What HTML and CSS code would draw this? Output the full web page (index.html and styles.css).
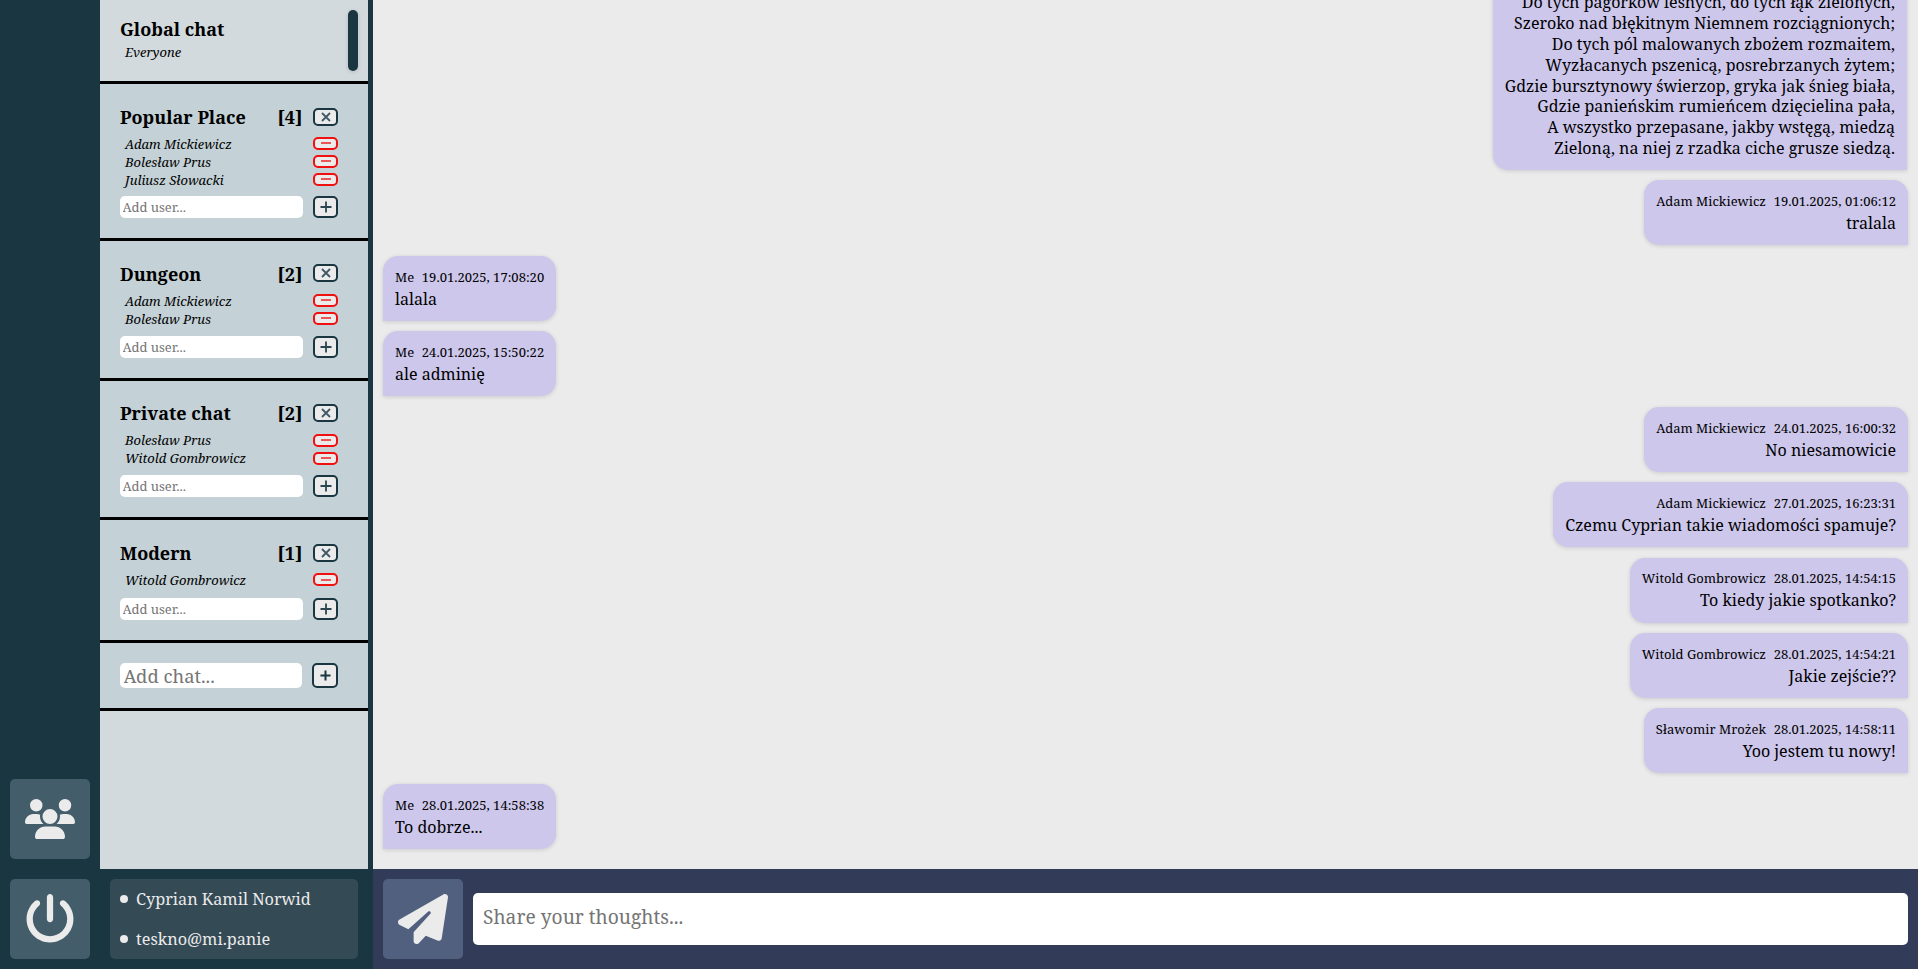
FILE: index.html
```html
<!DOCTYPE html>
<html lang="pl">
<head>
<meta charset="utf-8">
<title>Chat</title>
<link rel="stylesheet" href="styles.css">
</head>
<body>
<svg class="defs" width="0" height="0">
  <symbol id="x" viewBox="0 0 12 12"><path d="M2 2l8 8M10 2l-8 8"/></symbol>
  <symbol id="minus" viewBox="0 0 12 12"><path d="M1 6h10"/></symbol>
  <symbol id="plus" viewBox="0 0 12 12"><path d="M.5 6h11M6 .5v11"/></symbol>
</svg>
<div class="app">
  <nav class="rail">
    <button class="tile"><svg width="50" height="40" viewBox="0 0 640 512"><path d="M144 0a80 80 0 1 1 0 160A80 80 0 1 1 144 0zM512 0a80 80 0 1 1 0 160A80 80 0 1 1 512 0zM0 298.7C0 239.8 47.8 192 106.7 192h42.7c15.9 0 31 3.5 44.6 9.7c-1.3 7.2-1.9 14.7-1.9 22.3c0 38.2 16.8 72.5 43.3 96c-.2 0-.4 0-.7 0H21.3C9.6 320 0 310.4 0 298.7zM405.3 320c-.2 0-.4 0-.7 0c26.6-23.5 43.3-57.8 43.3-96c0-7.6-.7-15-1.9-22.3c13.6-6.3 28.7-9.7 44.6-9.7h42.7C592.2 192 640 239.8 640 298.7c0 11.8-9.6 21.3-21.3 21.3H405.3zM224 224a96 96 0 1 1 192 0 96 96 0 1 1 -192 0zM128 485.3C128 411.7 187.7 352 261.3 352H378.7C452.3 352 512 411.7 512 485.3c0 14.7-11.9 26.7-26.7 26.7H154.7c-14.7 0-26.7-11.9-26.7-26.7z"/></svg></button>
    <button class="tile"><svg width="50" height="50" viewBox="0 0 512 512"><path d="M288 32c0-17.7-14.3-32-32-32s-32 14.3-32 32V256c0 17.7 14.3 32 32 32s32-14.3 32-32V32zM143.5 120.6c13.6-11.3 15.4-31.5 4.1-45.1s-31.5-15.4-45.1-4.1C49.7 115.4 16 181.8 16 256c0 132.5 107.5 240 240 240s240-107.5 240-240c0-74.2-33.8-140.6-86.6-184.6c-13.6-11.3-33.8-9.4-45.1 4.1s-9.4 33.8 4.1 45.1c38.9 32.3 63.5 81 63.5 135.4c0 97.2-78.8 176-176 176s-176-78.8-176-176c0-54.4 24.7-103.1 63.5-135.4z"/></svg></button>
  </nav>
  <aside class="side">
    <div class="chats">
      <div class="thumb"></div>
      <section class="chat global">
        <div class="head"><h2>Global chat</h2></div>
        <div class="member"><span>Everyone</span></div>
      </section>
      <section class="chat">
        <div class="head"><h2>Popular Place</h2><b>[4]</b><button class="btn close"><svg><use href="#x"/></svg></button></div>
        <div class="member"><span>Adam Mickiewicz</span><button class="btn del"><svg><use href="#minus"/></svg></button></div>
        <div class="member"><span>Bolesław Prus</span><button class="btn del"><svg><use href="#minus"/></svg></button></div>
        <div class="member"><span>Juliusz Słowacki</span><button class="btn del"><svg><use href="#minus"/></svg></button></div>
        <div class="add"><input placeholder="Add user..."><button class="btn plus"><svg><use href="#plus"/></svg></button></div>
      </section>
      <section class="chat two">
        <div class="head"><h2>Dungeon</h2><b>[2]</b><button class="btn close"><svg><use href="#x"/></svg></button></div>
        <div class="member"><span>Adam Mickiewicz</span><button class="btn del"><svg><use href="#minus"/></svg></button></div>
        <div class="member"><span>Bolesław Prus</span><button class="btn del"><svg><use href="#minus"/></svg></button></div>
        <div class="add"><input placeholder="Add user..."><button class="btn plus"><svg><use href="#plus"/></svg></button></div>
      </section>
      <section class="chat two">
        <div class="head"><h2>Private chat</h2><b>[2]</b><button class="btn close"><svg><use href="#x"/></svg></button></div>
        <div class="member"><span>Bolesław Prus</span><button class="btn del"><svg><use href="#minus"/></svg></button></div>
        <div class="member"><span>Witold Gombrowicz</span><button class="btn del"><svg><use href="#minus"/></svg></button></div>
        <div class="add"><input placeholder="Add user..."><button class="btn plus"><svg><use href="#plus"/></svg></button></div>
      </section>
      <section class="chat one">
        <div class="head"><h2>Modern</h2><b>[1]</b><button class="btn close"><svg><use href="#x"/></svg></button></div>
        <div class="member"><span>Witold Gombrowicz</span><button class="btn del"><svg><use href="#minus"/></svg></button></div>
        <div class="add"><input placeholder="Add user..."><button class="btn plus"><svg><use href="#plus"/></svg></button></div>
      </section>
      <section class="chat new">
        <input placeholder="Add chat..."><button class="btn"><svg><use href="#plus"/></svg></button>
      </section>
    </div>
    <div class="user"><div>Cyprian Kamil Norwid</div><div>teskno@mi.panie</div></div>
  </aside>
  <main class="main">
    <div class="messages">
      <div class="msg long"><p>Do tych pagórków leśnych, do tych łąk zielonych,<br>Szeroko nad błękitnym Niemnem rozciągnionych;<br>Do tych pól malowanych zbożem rozmaitem,<br>Wyzłacanych pszenicą, posrebrzanych żytem;<br>Gdzie bursztynowy świerzop, gryka jak śnieg biała,<br>Gdzie panieńskim rumieńcem dzięcielina pała,<br>A wszystko przepasane, jakby wstęgą, miedzą<br>Zieloną, na niej z rzadka ciche grusze siedzą.</p></div>
      <div class="msg"><div class="meta"><span>Adam Mickiewicz</span><span>19.01.2025, 01:06:12</span></div><p>tralala</p></div>
      <div class="msg me"><div class="meta"><span>Me</span><span>19.01.2025, 17:08:20</span></div><p>lalala</p></div>
      <div class="msg me"><div class="meta"><span>Me</span><span>24.01.2025, 15:50:22</span></div><p>ale adminię</p></div>
      <div class="msg"><div class="meta"><span>Adam Mickiewicz</span><span>24.01.2025, 16:00:32</span></div><p>No niesamowicie</p></div>
      <div class="msg"><div class="meta"><span>Adam Mickiewicz</span><span>27.01.2025, 16:23:31</span></div><p>Czemu Cyprian takie wiadomości spamuje?</p></div>
      <div class="msg"><div class="meta"><span>Witold Gombrowicz</span><span>28.01.2025, 14:54:15</span></div><p>To kiedy jakie spotkanko?</p></div>
      <div class="msg"><div class="meta"><span>Witold Gombrowicz</span><span>28.01.2025, 14:54:21</span></div><p>Jakie zejście??</p></div>
      <div class="msg"><div class="meta"><span>Sławomir Mrożek</span><span>28.01.2025, 14:58:11</span></div><p>Yoo jestem tu nowy!</p></div>
      <div class="msg me"><div class="meta"><span>Me</span><span>28.01.2025, 14:58:38</span></div><p>To dobrze...</p></div>
    </div>
    <div class="compose">
      <button class="tile send"><svg width="50" height="50" viewBox="0 0 512 512"><path d="M498.1 5.6c10.1 7 15.4 19.1 13.5 31.2l-64 416c-1.5 9.7-7.4 18.2-16 23s-18.9 5.4-28 1.6L284 427.7l-68.5 74.1c-8.9 9.7-22.9 12.9-35.2 8.1S160 493.2 160 480V396.4c0-4 1.5-7.8 4.2-10.7L331.8 202.8c5.8-6.3 5.6-16-.4-22s-15.7-6.4-22-.7L106 360.8 17.7 316.6C7.1 311.3 .3 300.7 0 288.9s5.9-22.8 16.1-28.7l448-256c10.7-6.1 23.9-5.5 34 1.4z"/></svg></button>
      <input placeholder="Share your thoughts...">
    </div>
  </main>
</div>
</body>
</html>
```
FILE: styles.css
```css
* { box-sizing: border-box; }
body, h2, p { margin: 0; }
body, input, button { font-family: "Noto Serif", serif; }
input, button { border: 0; outline: 0; margin: 0; padding: 0; }
input::placeholder { color: #757575; }
.defs { position: absolute; }

.app { display: flex; height: 100vh; overflow: hidden; background: #1a3641; }

.rail {
  width: 100px;
  padding: 10px;
  display: flex;
  flex-direction: column;
  justify-content: flex-end;
  gap: 20px;
}
.tile {
  width: 80px;
  height: 80px;
  flex: none;
  display: flex;
  align-items: center;
  justify-content: center;
  border-radius: 5px;
  background: #435e6a;
}
.tile svg { fill: #ebebeb; }

.side { width: 273px; display: flex; flex-direction: column; }
.chats { position: relative; width: 268px; flex: 1; background: #d2dadd; }
.thumb {
  position: absolute;
  top: 10px;
  right: 10px;
  width: 10px;
  height: 61px;
  border-radius: 5px;
  background: #1a3641;
  box-shadow: 0 1px 4px rgba(0, 0, 0, .14);
}
.chat { padding: 20.3px 30px 20px 20px; border-bottom: 3px solid #000; background: #c4d1d6; }
.chat.global { height: 84px; padding-top: 17px; background: none; }
.head {
  display: flex;
  align-items: center;
  height: 24.5px;
  margin-bottom: 5.7px;
  font-size: 18px;
  line-height: 24.5px;
}
.global .head { margin-bottom: 1px; }
.head h2 { flex: 1; font-size: 18px; }
.head h2, .head b { padding-top: .8px; }
.global h2 { padding-top: 0; }
.head b { margin-right: 10.5px; }
.member {
  display: flex;
  align-items: center;
  justify-content: space-between;
  height: 18px;
  padding-left: 5px;
  font-size: 13px;
  font-style: italic;
  line-height: 18px;
}
.member span { padding-top: .6px; }
.btn {
  width: 25px;
  flex: none;
  display: flex;
  align-items: center;
  justify-content: center;
  border: 2px solid #1a3641;
  border-radius: 5px;
  background: #ebebeb;
}
.btn svg { flex: none; width: 12px; height: 12px; fill: none; stroke: #2b4651; stroke-width: 1.8; overflow: visible; }
.close { height: 18px; }
.close svg { stroke: #405863; }
.del { height: 13px; border-color: #f01010; }
.del svg { stroke: #e81818; stroke-width: 1.4; }
.plus { height: 22px; }
.add { display: flex; gap: 10px; margin-top: 7.45px; }
.two .add { margin-top: 8.2px; }
.one .add { margin-top: 9.3px; }
.add input {
  width: 183px;
  height: 22px;
  padding: 0 2.5px;
  border-radius: 5px;
  font-size: 13px;
}
.chat.new { display: flex; gap: 10px; padding: 20px 30px 20px 20px; }
.new input { width: 182px; height: 25px; padding: 0 3.5px 1px; border-radius: 5px; font-size: 18.4px; }
.new .btn { width: 26px; height: 25px; }
.new .btn svg { width: 11px; height: 11px; stroke: #1a3641; stroke-width: 2.2; }
.user {
  width: 248px;
  height: 80px;
  margin: 10px;
  padding-left: 10px;
  border-radius: 5px;
  background: #344a55;
  color: #ebebeb;
  font-size: 16.25px;
  line-height: 40px;
}
.user div { display: flex; align-items: center; gap: 8px; }
.user div::before { content: ""; width: 8px; height: 8px; border-radius: 50%; background: #ebebeb; }

.main { flex: 1; min-width: 0; display: flex; flex-direction: column; background: #ebebeb; }
.messages {
  flex: 1;
  min-height: 0;
  display: flex;
  flex-direction: column;
  justify-content: flex-end;
  align-items: flex-end;
  gap: 10.45px;
  padding: 0 10px 20.2px;
  overflow: hidden;
}
.msg {
  flex: none;
  padding: 11.9px 12px 11.3px;
  border-radius: 15px 15px 0 15px;
  background: #cdc7eb;
  box-shadow: 0 1px 4px rgba(0, 0, 0, .14);
  font-size: 16px;
  line-height: 20.8px;
  text-align: right;
}
.msg.me { align-self: flex-start; border-radius: 15px 15px 15px 0; text-align: left; }
.msg.long { margin-right: 1px; padding-top: 40px; }
.meta {
  display: flex;
  justify-content: flex-end;
  gap: 7.7px;
  margin-bottom: 3px;
  font-size: 13px;
  line-height: 18px;
}
.compose { height: 100px; display: flex; align-items: center; gap: 10px; padding: 10px; background: #323c58; }
.send { background: #52607f; }
.compose input {
  flex: 1;
  height: 52px;
  padding: 0 10px 5px;
  border-radius: 5px;
  font-size: 19.2px;
}
```
